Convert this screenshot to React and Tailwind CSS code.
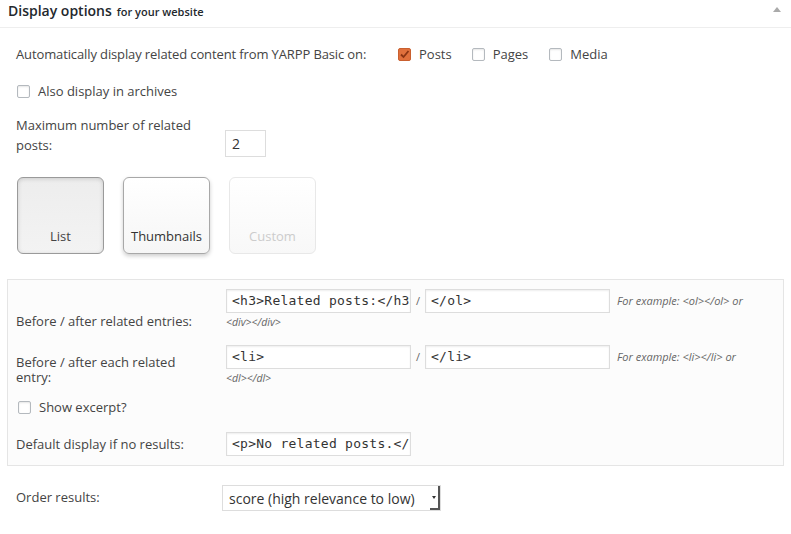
import { useState } from "react";

function Box({ checked }) {
  if (checked) {
    return (
      <span className="inline-flex items-center justify-center w-[13px] h-[13px] rounded-[2px] bg-[#e0703c] border border-[#c9602f] shrink-0">
        <svg width="11" height="11" viewBox="0 0 11 11">
          <path d="M2 5.5 L4.5 8 L9.5 2" fill="none" stroke="#8a3413" strokeWidth="1.8" />
        </svg>
      </span>
    );
  }
  return (
    <span className="inline-block w-[13px] h-[13px] rounded-[2px] bg-white border border-[#b4b9be] shadow-[inset_0_1px_2px_rgba(0,0,0,0.1)] shrink-0" />
  );
}

function Check({ label, checked, className = "" }) {
  return (
    <label className={"flex items-center gap-[8px] " + className}>
      <Box checked={checked} />
      <span>{label}</span>
    </label>
  );
}

function Field({ value, className = "" }) {
  return (
    <div
      className={
        "h-[24px] bg-white border border-[#dddddd] shadow-[inset_0_1px_2px_rgba(0,0,0,0.07)] px-[5px] flex items-center overflow-hidden whitespace-nowrap font-['DejaVu_Sans_Mono',monospace] text-[13px] tracking-[0.25px] text-[#333] " +
        className
      }
    >
      <span className="whitespace-nowrap">{value}</span>
    </div>
  );
}

export default function App() {
  const [tpl] = useState("list");

  return (
    <div className="w-[791px] h-[534px] bg-white font-['Open_Sans',sans-serif] text-[13px] text-[#444] overflow-hidden">
      <div className="h-[28px] border-b border-[#eeeeee] flex items-start pt-[1px] px-[8px]">
        <span className="text-[14px] font-semibold text-[#23282d] leading-[19px]">Display options</span>
        <span className="text-[11px] font-semibold text-[#23282d] ml-[5px] leading-[19px] pt-[1px]">for your website</span>
        <span className="ml-auto mr-[2px] mt-[6px] w-0 h-0 border-l-[4px] border-r-[4px] border-b-[5px] border-l-transparent border-r-transparent border-b-[#aaaaaa]" />
      </div>

      <div className="px-[16px] mt-[16px] flex items-center leading-[20px]">
        <span className="w-[382px] tracking-[-0.12px]">Automatically display related content from YARPP Basic on:</span>
        <Check label="Posts" checked />
        <Check label="Pages" className="ml-[20px]" />
        <Check label="Media" className="ml-[21px]" />
      </div>

      <div className="pl-[17px] mt-[17px] leading-[20px]">
        <Check label="Also display in archives" />
      </div>

      <div className="px-[16px] mt-[14px] flex leading-[20px]">
        <span className="w-[209px]">
          Maximum number of related
          <br />
          posts:
        </span>
        <div className="mt-[15px] w-[41px] h-[27px] border border-[#dddddd] bg-white flex items-center px-[6px] text-[14px] text-[#333]">2</div>
      </div>

      <div className="pl-[17px] mt-[20px] flex gap-[19px]">
        <div
          className={
            "w-[87px] h-[77px] rounded-[6px] border flex items-end justify-center pb-[7px] text-[#444] " +
            (tpl === "list"
              ? "border-[#9a9a9a] bg-gradient-to-b from-[#ededed] to-[#f3f3f3] shadow-[inset_0_1px_4px_rgba(0,0,0,0.15)]"
              : "border-[#a8a8a8] bg-white")
          }
        >
          List
        </div>
        <div className="w-[87px] h-[77px] rounded-[6px] border border-[#a8a8a8] flex items-end justify-center pb-[7px] bg-gradient-to-b from-white to-[#f6f6f6] shadow-[0_2px_4px_rgba(0,0,0,0.2)] text-[#333]">
          Thumbnails
        </div>
        <div className="w-[87px] h-[77px] rounded-[6px] border border-[#e8e8e8] flex items-end justify-center pb-[7px] bg-gradient-to-b from-white to-[#f8f8f8] text-[#cccccc]">
          Custom
        </div>
      </div>

      <div className="mx-[7px] mt-[25px] border border-[#e5e5e5] bg-[#fcfcfc] px-[8px] pt-[9px] pb-[9px]">
        <div className="flex">
          <span className="w-[210px] mt-[22px] leading-[20px]">Before / after related entries:</span>
          <div>
            <div className="flex items-center">
              <Field value="<h3>Related posts:</h3>" className="w-[185px]" />
              <span className="w-[14px] text-center text-[11px] text-[#666]">/</span>
              <Field value="</ol>" className="w-[185px]" />
              <span className="ml-[7px] text-[11px] italic text-[#666]">For example: &lt;ol&gt;&lt;/ol&gt; or</span>
            </div>
            <div className="text-[10.5px] italic text-[#666] leading-[12px] mt-[3px]">&lt;div&gt;&lt;/div&gt;</div>
          </div>
        </div>

        <div className="flex mt-[14px]">
          <span className="w-[210px] mt-[10px] leading-[15px]">
            Before / after each related
            <br />
            entry:
          </span>
          <div>
            <div className="flex items-center">
              <Field value="<li>" className="w-[185px]" />
              <span className="w-[14px] text-center text-[11px] text-[#666]">/</span>
              <Field value="</li>" className="w-[185px]" />
              <span className="ml-[7px] text-[11px] italic text-[#666]">For example: &lt;li&gt;&lt;/li&gt; or</span>
            </div>
            <div className="text-[10.5px] italic text-[#666] leading-[12px] mt-[3px]">&lt;dl&gt;&lt;/dl&gt;</div>
          </div>
        </div>

        <div className="mt-[12px] pl-[2px] leading-[20px]">
          <Check label="Show excerpt?" />
        </div>

        <div className="flex items-center mt-[15px]">
          <span className="w-[210px] leading-[20px]">Default display if no results:</span>
          <Field value="<p>No related posts.</p>" className="w-[185px]" />
        </div>
      </div>

      <div className="px-[16px] mt-[19px] flex items-center">
        <span className="w-[206px]">Order results:</span>
        <div className="w-[219px] h-[26px] border border-[#dddddd] bg-white flex items-center pl-[6px] text-[14px] text-[#333] relative">
          <span>score (high relevance to low)</span>
          <span className="absolute right-0 top-0 bottom-0 w-[10px] border-r-2 border-b-2 border-[#555] flex items-center justify-center">
            <span className="w-0 h-0 border-l-[2.5px] border-r-[2.5px] border-t-[3px] border-l-transparent border-r-transparent border-t-[#333]" />
          </span>
        </div>
      </div>
    </div>
  );
}
